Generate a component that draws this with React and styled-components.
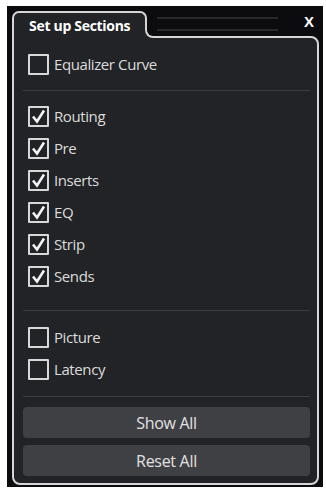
import styled, { createGlobalStyle } from 'styled-components';

const Global = createGlobalStyle`
    body {
        margin: 0;
        background: #ffffff;
        font-family: "Open Sans", "Liberation Sans", sans-serif;
    }
`;

const Frame = styled.div`
    width: 316px;
    height: 481px;
    margin: 6px 0 0 7px;
    padding: 5px 4px 0 5px;
    box-sizing: border-box;
    background: #0c0c0e;
    display: flex;
    flex-direction: column;
`;

const Header = styled.div`
    display: flex;
    align-items: flex-start;
    position: relative;
    z-index: 1;
`;

const Tab = styled.div`
    position: relative;
    width: 135px;
    height: 27px;
    margin-bottom: -2px;
    box-sizing: border-box;
    border: 2px solid #d6d6d6;
    border-bottom: 0;
    border-radius: 7px 7px 0 0;
    background: #222326;
    color: #ffffff;
    font-weight: 700;
    font-size: 14px;
    padding: 3px 0 0 15px;
    letter-spacing: -0.3px;

    &::before {
        content: '';
        position: absolute;
        right: -10px;
        bottom: 0;
        width: 10px;
        height: 10px;
        background: #222326;
    }

    &::after {
        content: '';
        position: absolute;
        right: -10px;
        bottom: 0;
        width: 10px;
        height: 10px;
        box-sizing: border-box;
        border-left: 2px solid #d6d6d6;
        border-bottom: 2px solid #d6d6d6;
        border-bottom-left-radius: 8px;
        background: #0c0c0e;
    }
`;

const Grip = styled.div`
    flex: 1;
    height: 10px;
    margin: 6px 26px 0 10px;
    border-top: 2px solid #28282b;
    border-bottom: 2px solid #28282b;
`;

const Close = styled.div`
    color: #ffffff;
    font-family: "Liberation Sans", sans-serif;
    font-weight: 700;
    font-size: 15px;
    line-height: 16px;
    margin: 3px 5px 0 0;
`;

const Panel = styled.div`
    flex: 1;
    margin-bottom: 3px;
    border: 2px solid #d6d6d6;
    border-radius: 0 8px 8px 8px;
    background: #222326;
    display: flex;
    flex-direction: column;
`;

const Section = styled.div`
    padding: ${({pad}) => pad};
    display: flex;
    flex-direction: column;
`;

const Divider = styled.div`
    height: 1px;
    margin: 0 7px 0 9px;
    background: #3c3d41;
`;

const Row = styled.label`
    height: 32px;
    display: flex;
    align-items: center;
    gap: 5px;
    padding-left: 14px;
    color: #dcdcdc;
    font-size: 15px;
    letter-spacing: -0.4px;
`;

const Box = styled.span`
    width: 21px;
    height: 21px;
    box-sizing: border-box;
    border: 2px solid #d8d8d8;
    border-radius: 1px;
    display: flex;
    align-items: center;
    justify-content: center;
`;

const Buttons = styled.div`
    display: flex;
    flex-direction: column;
    gap: 7px;
    padding: 10px 7px 7px 9px;
`;

const Button = styled.div`
    height: 31px;
    border-radius: 4px;
    background: #3f4044;
    color: #e2e2e2;
    font-size: 16px;
    display: flex;
    align-items: center;
    justify-content: center;
    letter-spacing: -0.3px;
`;

const Check = ({checked, label}) => (
    <Row>
        <Box>
            {checked && (
                <svg width="15" height="15" viewBox="0 0 15 15">
                    <polyline points="2,7.5 6,12.5 13,1.5" fill="none" stroke="#f2f2f2" strokeWidth="2.6" strokeLinejoin="miter" />
                </svg>
            )}
        </Box>
        {label}
    </Row>
);

const App = () => {
    return (
        <>
            <Global />
            <Frame>
                <Header>
                    <Tab>Set up Sections</Tab>
                    <Grip />
                    <Close>X</Close>
                </Header>
                <Panel>
                    <Section pad="10px 0 10px">
                        <Check label="Equalizer Curve" />
                    </Section>
                    <Divider />
                    <Section pad="9px 0 18px">
                        {['Routing', 'Pre', 'Inserts', 'EQ', 'Strip', 'Sends'].map(name => (
                            <Check key={name} label={name} checked />
                        ))}
                    </Section>
                    <Divider />
                    <Section pad="10px 0 11px">
                        <Check label="Picture" />
                        <Check label="Latency" />
                    </Section>
                    <Divider />
                    <Buttons>
                        <Button>Show All</Button>
                        <Button>Reset All</Button>
                    </Buttons>
                </Panel>
            </Frame>
        </>
    );
};

export default App;
